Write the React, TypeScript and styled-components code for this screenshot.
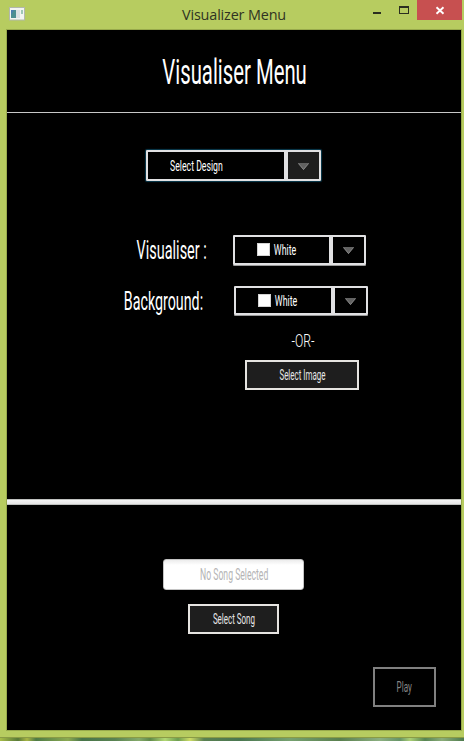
import React from 'react';
import styled, { createGlobalStyle } from 'styled-components';

const GlobalStyle = createGlobalStyle`
  * { box-sizing: border-box; }
  html, body { margin: 0; padding: 0; overflow: hidden; }
`;

const Desktop = styled.div`
  width: 464px;
  height: 741px;
  display: flex;
  flex-direction: column;
  background: #b7cc60;
`;

const TitleBar = styled.header`
  height: 29px;
  flex: none;
  display: grid;
  grid-template-columns: 104px 1fr 104px;
  align-items: start;
`;

const AppIcon = styled.svg`
  display: block;
  margin: 7px 0 0 9px;
`;

const WindowTitle = styled.div`
  text-align: center;
  font: 14.4px/20px 'Open Sans', 'Noto Sans', sans-serif;
  letter-spacing: -0.15px;
  color: #2f3322;
  white-space: nowrap;
  padding: 5px 0 0 4px;
`;

const WindowControls = styled.div`
  display: flex;
  justify-content: flex-end;
  padding-right: 2px;
`;

const ControlButton = styled.div<{ $close?: boolean }>`
  width: ${(p) => (p.$close ? 45 : 27)}px;
  height: 20px;
  background: ${(p) => (p.$close ? '#c75050' : 'transparent')};
  svg { display: block; }
`;

const Client = styled.main`
  width: 456px;
  height: 702px;
  flex: none;
  margin-left: 6px;
  border: 1px solid #98aa4c;
  background: #000;
  display: flex;
  flex-direction: column;
`;

const Heading = styled.section`
  height: 83px;
  flex: none;
  border-bottom: 1px solid #c8c8c8;
  padding: 22px 0 0 155px;
`;

const Options = styled.section`
  height: 386px;
  flex: none;
  display: flex;
  flex-direction: column;
  align-items: flex-start;
  padding-top: 37px;
`;

const Divider = styled.div`
  height: 6px;
  flex: none;
  background: linear-gradient(#f5f5f5, #e6e6e6);
  border: solid #bfc1bf;
  border-width: 1px 0;
`;

const Player = styled.section`
  flex: 1;
  display: flex;
  flex-direction: column;
  align-items: flex-start;
  padding-top: 54px;
`;

const TextBox = styled.span<{ $width: number }>`
  display: flex;
  justify-content: center;
  flex: none;
  width: ${(p) => p.$width}px;
`;

const Glyphs = styled.span<{ $size: number; $squeeze: number; $color: string; $weight: number }>`
  flex: none;
  white-space: nowrap;
  font: ${(p) => p.$weight} ${(p) => p.$size}px/1.2 Roboto, 'Liberation Sans', sans-serif;
  color: ${(p) => p.$color};
  transform: scaleX(${(p) => p.$squeeze});
`;

type CondensedProps = {
  width: number;
  size: number;
  squeeze: number;
  color?: string;
  weight?: number;
  children: string;
};

const Condensed = ({ width, size, squeeze, color = '#fff', weight = 400, children }: CondensedProps) => (
  <TextBox $width={width}>
    <Glyphs $size={size} $squeeze={squeeze} $color={color} $weight={weight}>{children}</Glyphs>
  </TextBox>
);

const FieldRow = styled.div<{ $top: number; $indent: number; $gap: number; $height?: number }>`
  display: flex;
  align-items: center;
  gap: ${(p) => p.$gap}px;
  height: ${(p) => (p.$height ? `${p.$height}px` : 'auto')};
  margin: ${(p) => p.$top}px 0 0 ${(p) => p.$indent}px;
`;

const FieldLabel = styled.label<{ $drop: number }>`
  padding-top: ${(p) => p.$drop}px;
`;

const Combo = styled.div<{ $width: number; $height: number; $focused?: boolean }>`
  display: flex;
  flex: none;
  width: ${(p) => p.$width}px;
  height: ${(p) => p.$height}px;
  border: 2px solid #e1e1e3;
  border-radius: 1px;
  box-shadow: ${(p) => (p.$focused ? '0 0 1px 1px #0b3c50' : '0 1px 0 #9a9a9a')};
`;

const ComboValue = styled.div<{ $pad: number }>`
  flex: 1;
  display: flex;
  align-items: center;
  gap: 4px;
  padding-left: ${(p) => p.$pad}px;
`;

const ComboArrow = styled.div<{ $width: number; $focused?: boolean }>`
  width: ${(p) => p.$width}px;
  border-left: 4px solid #e1e1e3;
  background: ${(p) => (p.$focused ? '#1e1e1e' : '#000')};
  display: flex;
  align-items: center;
  justify-content: center;
  padding-top: 1px;
`;

const Swatch = styled.span`
  width: 13px;
  height: 13px;
  flex: none;
  margin-top: -1px;
  background: #fff;
  border: 1px solid #d4d4d4;
`;

const Button = styled.button<{ $w: number; $h: number; $disabled?: boolean }>`
  display: flex;
  align-items: center;
  justify-content: center;
  flex: none;
  padding: 1px 0 0;
  width: ${(p) => p.$w}px;
  height: ${(p) => p.$h}px;
  border: 2px solid ${(p) => (p.$disabled ? '#808080' : '#e6e4e1')};
  background: ${(p) => (p.$disabled ? '#000' : '#1e1e1e')};
`;

const SongField = styled.div`
  width: 141px;
  height: 31px;
  border: 1px solid #c4c4c4;
  border-radius: 3px;
  background: linear-gradient(#ececec, #fff 5px);
  display: flex;
  align-items: center;
  justify-content: center;
  padding: 1px 0 0 1px;
`;

const Wallpaper = styled.footer`
  height: 4px;
  margin-top: auto;
  border-top: 1px solid #8a9b45;
  background: linear-gradient(90deg, #a8bd48 0, #587a38 18px, #a9b645 27px, #4e7b45 36px, #8caa52 68px, #477449 82px, #598352 115px, #85aa6a 139px, #5f8a4a 150px, #b2d873 165px, #6c9d50 178px, #cfdd66 190px, #598051 204px, #4a7750 240px, #76a170 290px, #597f4e 340px, #8cb081 380px, #669467 400px, #abd075 410px, #568452 425px, #8bad79 442px, #4d7a4d 464px);
`;

const Arrow = () => (
  <svg width="11" height="7" viewBox="0 0 11 7">
    <path d="M0 0H11L5.5 7Z" fill="#626262" />
    <path d="M0.3 0.4L5.5 6.5L10.7 0.4" fill="none" stroke="#969696" strokeWidth="0.8" />
  </svg>
);

export default function App() {
  return (
    <>
      <GlobalStyle />
      <Desktop>
        <TitleBar>
          <AppIcon width="16" height="14" viewBox="0 0 16 14">
            <rect x="0.5" y="0.5" width="15" height="12.5" fill="#f3f5f2" stroke="#b2b8ac" />
            <rect x="2" y="3" width="5" height="8" fill="#4d8f91" />
            <path d="M2 3H5L2 8Z" fill="#4b7fb0" />
            <rect x="7" y="3" width="4" height="8" fill="#dce1e3" />
            <rect x="12" y="3" width="2" height="4" fill="#9fc8b6" />
          </AppIcon>
          <WindowTitle>Visualizer Menu</WindowTitle>
          <WindowControls>
            <ControlButton>
              <svg width="27" height="20"><rect x="10" y="12" width="8" height="2" fill="#2b2f20" /></svg>
            </ControlButton>
            <ControlButton>
              <svg width="27" height="20"><path d="M9 6H19V14H9ZM10 8V13H18V8Z" fill="#2b2f20" fillRule="evenodd" /></svg>
            </ControlButton>
            <ControlButton $close>
              <svg width="45" height="20"><path d="M19.5 7.2L26.5 13.8M26.5 7.2L19.5 13.8" stroke="#fff" strokeWidth="1.9" /></svg>
            </ControlButton>
          </WindowControls>
        </TitleBar>
        <Client>
          <Heading>
            <Condensed width={145} size={35} squeeze={0.58}>Visualiser Menu</Condensed>
          </Heading>
          <Options>
            <FieldRow $top={0} $indent={139} $gap={0}>
              <Combo $width={175} $height={31} $focused>
                <ComboValue $pad={22}>
                  <Condensed width={53} size={15} squeeze={0.58}>Select Design</Condensed>
                </ComboValue>
                <ComboArrow $width={35} $focused><Arrow /></ComboArrow>
              </Combo>
            </FieldRow>
            <FieldRow $top={54} $indent={130} $gap={26} $height={30}>
              <FieldLabel $drop={1}>
                <Condensed width={70} size={25} squeeze={0.578}>Visualiser :</Condensed>
              </FieldLabel>
              <Combo $width={133} $height={30}>
                <ComboValue $pad={22}>
                  <Swatch />
                  <Condensed width={23} size={15} squeeze={0.59}>White</Condensed>
                </ComboValue>
                <ComboArrow $width={35}><Arrow /></ComboArrow>
              </Combo>
            </FieldRow>
            <FieldRow $top={21} $indent={116} $gap={31} $height={29}>
              <FieldLabel $drop={3}>
                <Condensed width={80} size={25} squeeze={0.57}>Background:</Condensed>
              </FieldLabel>
              <Combo $width={134} $height={29}>
                <ComboValue $pad={22}>
                  <Swatch />
                  <Condensed width={23} size={15} squeeze={0.59}>White</Condensed>
                </ComboValue>
                <ComboArrow $width={35}><Arrow /></ComboArrow>
              </Combo>
            </FieldRow>
            <FieldRow $top={15} $indent={284} $gap={0} $height={22}>
              <Condensed width={23} size={18} squeeze={0.68} weight={300}>-OR-</Condensed>
            </FieldRow>
            <FieldRow $top={8} $indent={238} $gap={0}>
              <Button $w={114} $h={30}>
                <Condensed width={45} size={14} squeeze={0.57} color="#e6e6e6">Select Image</Condensed>
              </Button>
            </FieldRow>
          </Options>
          <Divider />
          <Player>
            <FieldRow $top={0} $indent={156} $gap={0}>
              <SongField>
                <Condensed width={68} size={16} squeeze={0.54} color="#b4b4b4">No Song Selected</Condensed>
              </SongField>
            </FieldRow>
            <FieldRow $top={14} $indent={181} $gap={0}>
              <Button $w={91} $h={30}>
                <Condensed width={42} size={14} squeeze={0.57} color="#e6e6e6">Select Song</Condensed>
              </Button>
            </FieldRow>
            <FieldRow $top={33} $indent={366} $gap={0}>
              <Button $w={63} $h={40} $disabled>
                <Condensed width={15} size={14} squeeze={0.58} color="#858585">Play</Condensed>
              </Button>
            </FieldRow>
          </Player>
        </Client>
        <Wallpaper />
      </Desktop>
    </>
  );
}
